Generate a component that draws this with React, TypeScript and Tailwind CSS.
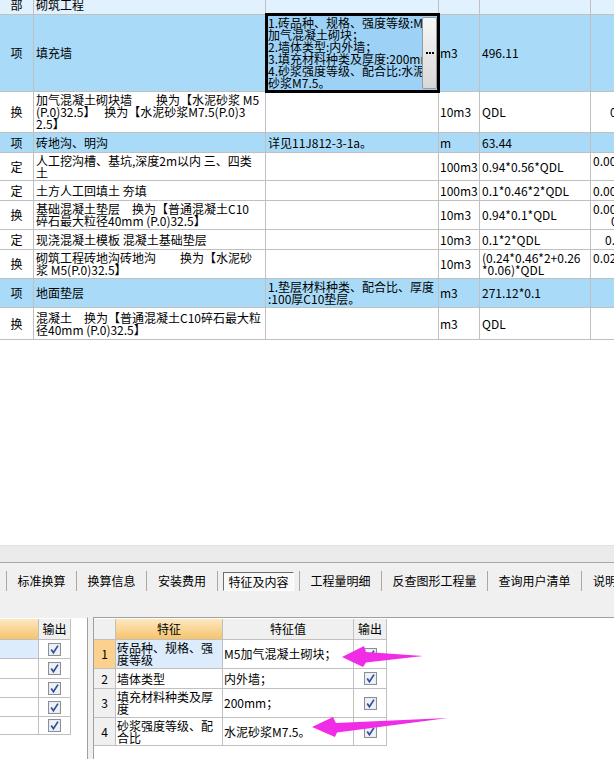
import React from "react";

type Line = { t: string; pl?: number };
type RowDef = {
  h: number;
  bg: string;
  c1: string;
  c2: string[];
  c3?: string[];
  c4?: string;
  c5?: string[];
  c6?: Line[];
  editor?: boolean;
  mt?: boolean;
};

const XI = "bg-[#a9dbf9]";
const WH = "bg-white";

const rows: RowDef[] = [
  { h: 20, bg: "bg-[#e1f1fd]", c1: "部", c2: ["砌筑工程"], mt: true },
  { h: 77, bg: XI, c1: "项", c2: ["填充墙"], editor: true, c4: "m3", c5: ["496.11"] },
  {
    h: 41,
    bg: WH,
    c1: "换",
    c2: ["加气混凝土砌块墙　　换为【水泥砂浆 M5", "(P.0)32.5】　 换为【水泥砂浆M7.5(P.0)3", "2.5】"],
    c4: "10m3",
    c5: ["QDL"],
    c6: [{ t: "0", pl: 19 }],
  },
  { h: 20, bg: XI, c1: "项", c2: ["砖地沟、明沟"], c3: ["详见11J812-3-1a。"], c4: "m", c5: ["63.44"] },
  {
    h: 28,
    bg: WH,
    c1: "定",
    c2: ["人工挖沟槽、基坑,深度2m以内 三、四类", "土"],
    c4: "100m3",
    c5: ["0.94*0.56*QDL"],
    c6: [{ t: "0.005264", pl: 2 }, { t: " ", pl: 2 }],
  },
  {
    h: 20,
    bg: WH,
    c1: "定",
    c2: ["土方人工回填土 夯填"],
    c4: "100m3",
    c5: ["0.1*0.46*2*QDL"],
    c6: [{ t: "0.00092", pl: 2 }],
  },
  {
    h: 29,
    bg: WH,
    c1: "换",
    c2: ["基础混凝土垫层　换为【普通混凝土C10", "碎石最大粒径40mm (P.0)32.5】"],
    c4: "10m3",
    c5: ["0.94*0.1*QDL"],
    c6: [{ t: "0.00940", pl: 2 }, { t: "0", pl: 20 }],
  },
  {
    h: 20,
    bg: WH,
    c1: "定",
    c2: ["现浇混凝土模板 混凝土基础垫层"],
    c4: "10m3",
    c5: ["0.1*2*QDL"],
    c6: [{ t: "0.2", pl: 14 }],
  },
  {
    h: 29,
    bg: WH,
    c1: "换",
    c2: ["砌筑工程砖地沟砖地沟　　换为【水泥砂", "浆 M5(P.0)32.5】"],
    c4: "10m3",
    c5: ["(0.24*0.46*2+0.26", "*0.06)*QDL"],
    c6: [{ t: "0.0236", pl: 2 }, { t: " ", pl: 2 }],
  },
  {
    h: 29,
    bg: XI,
    c1: "项",
    c2: ["地面垫层"],
    c3: ["1.垫层材料种类、配合比、厚度", ":100厚C10垫层。"],
    c4: "m3",
    c5: ["271.12*0.1"],
  },
  {
    h: 32,
    bg: WH,
    c1: "换",
    c2: ["混凝土　换为【普通混凝土C10碎石最大粒", "径40mm (P.0)32.5】"],
    c4: "m3",
    c5: ["QDL"],
  },
];

const cellBase = "shrink-0 border-r border-b border-[#c0c0c0] flex items-center overflow-hidden";

function Lines({ lines }: { lines: string[] }) {
  return (
    <div className="flex flex-col">
      {lines.map((l, i) => (
        <div key={i} className="whitespace-pre leading-[12px]">
          {l}
        </div>
      ))}
    </div>
  );
}

function Editor() {
  const lines = [
    "1.砖品种、规格、强度等级:M5",
    "加气混凝土砌块；",
    "2.墙体类型:内外墙；",
    "3.填充材料种类及厚度:200mm；",
    "4.砂浆强度等级、配合比:水泥",
    "砂浆M7.5。",
  ];
  return (
    <div className="absolute left-[-1px] top-[-2px] w-[175px] h-[80px] border-[3px] border-black bg-[#9dd2f6] z-10">
      <div className="w-[154px] overflow-hidden pl-[0px] pt-[1px]">
        {lines.map((l, i) => (
          <div key={i} className="whitespace-pre leading-[12px]">
            {l}
          </div>
        ))}
      </div>
      <div className="absolute right-0 top-[1px] w-[15px] h-[72px] rounded-[2px] border border-[#9a9a9a] bg-gradient-to-b from-[#f7f7f7] to-[#d8d8d8] flex items-center justify-center gap-[1px]">
        <div className="w-[2px] h-[2px] bg-black" />
        <div className="w-[2px] h-[2px] bg-black" />
        <div className="w-[2px] h-[2px] bg-black" />
      </div>
    </div>
  );
}

function TopTable() {
  return (
    <div className="flex flex-col text-[12px] text-black">
      {rows.map((r, i) => (
        <div
          key={i}
          className={`flex ${r.bg} ${r.mt ? "mt-[-5px]" : ""}`}
          style={{ height: r.h }}
        >
          <div className={`${cellBase} w-[34px] justify-center`}>{r.c1}</div>
          <div className={`${cellBase} w-[232px] pl-[2px]`}>
            <Lines lines={r.c2} />
          </div>
          <div className={`${cellBase} w-[173px] pl-[2px] ${r.editor ? "relative overflow-visible" : ""}`}>
            {r.c3 && <Lines lines={r.c3} />}
            {r.editor && <Editor />}
          </div>
          <div className={`${cellBase} w-[41px] pl-[1px]`}>{r.c4 ?? ""}</div>
          <div className={`${cellBase} w-[111px] pl-[2px]`}>{r.c5 && <Lines lines={r.c5} />}</div>
          <div className={`${cellBase} w-[80px]`}>
            {r.c6 && (
              <div className="flex flex-col">
                {r.c6.map((l, k) => (
                  <div key={k} className="whitespace-pre leading-[12px]" style={{ paddingLeft: l.pl ?? 0 }}>
                    {l.t}
                  </div>
                ))}
              </div>
            )}
          </div>
        </div>
      ))}
    </div>
  );
}

const tabs = [
  { t: "标准换算", w: 69 },
  { t: "换算信息", w: 69 },
  { t: "安装费用", w: 70 },
  { t: "特征及内容", w: 81, sel: true },
  { t: "工程量明细", w: 81 },
  { t: "反查图形工程量", w: 105 },
  { t: "查询用户清单", w: 93 },
];

function Sep() {
  return <div className="w-px h-[20px] bg-[#a8a8a8] shrink-0" />;
}

function Tabs() {
  return (
    <div className="flex items-start pl-[6px] pt-[8px] text-[12px] text-black">
      {tabs.map((t, i) => (
        <React.Fragment key={i}>
          <Sep />
          <div className="h-[20px] flex justify-center items-start shrink-0" style={{ width: t.w }}>
            {t.sel ? (
              <div className="mt-[1px] h-[19px] w-[71px] border-t border-l border-[#6e6e6e] border-r-white border-b-white border-r border-b bg-[#f9f9f9] flex items-center justify-center whitespace-nowrap">
                {t.t}
              </div>
            ) : (
              <div className="h-[20px] flex items-center whitespace-nowrap">{t.t}</div>
            )}
          </div>
        </React.Fragment>
      ))}
      <Sep />
      <div className="h-[20px] flex items-center pl-[11px] whitespace-nowrap">说明</div>
    </div>
  );
}

function Check() {
  return (
    <svg width="13" height="13" viewBox="0 0 13 13">
      <rect x="0.5" y="0.5" width="12" height="12" fill="#e4e8ee" stroke="#8c8f94" />
      <rect x="1.5" y="1.5" width="10" height="10" fill="#eef1f5" />
      <path d="M3.2 6.6 L5.4 9.8 L10 2.6" stroke="#2f4f9f" strokeWidth="1.7" fill="none" />
    </svg>
  );
}

const orangeHead = "bg-gradient-to-b from-[#fde8c0] to-[#f5c36c]";

function LeftPanel() {
  const hs = [19, 20, 19, 19, 18];
  return (
    <div className="w-[88px] shrink-0 bg-white border-r border-[#a0a0a0] flex flex-col pt-[1px] border-t border-t-[#f0f0f0]">
      <div className="flex h-[21px] text-[12px]">
        <div className={`w-[39px] border-r border-b border-[#c0c0c0] ${orangeHead}`} />
        <div className="w-[32px] border-r border-b border-[#c0c0c0] bg-[#f0f0f0] flex items-center justify-center">输出</div>
      </div>
      {hs.map((h, i) => (
        <div key={i} className="flex" style={{ height: h }}>
          <div className={`w-[39px] border-r border-b border-[#c0c0c0] ${i === 0 ? "bg-[#dcecfc]" : "bg-white"}`} />
          <div className="w-[32px] border-r border-b border-[#c0c0c0] flex items-center justify-center">
            <Check />
          </div>
        </div>
      ))}
    </div>
  );
}

const feats = [
  { n: "1", k: ["砖品种、规格、强", "度等级"], v: "M5加气混凝土砌块；", h: 29 },
  { n: "2", k: ["墙体类型"], v: "内外墙；", h: 20 },
  { n: "3", k: ["填充材料种类及厚", "度"], v: "200mm；", h: 29 },
  { n: "4", k: ["砂浆强度等级、配", "合比"], v: "水泥砂浆M7.5。", h: 28 },
];

function RightPanel() {
  const c = "border-r border-b border-[#c0c0c0] flex items-center shrink-0";
  return (
    <div className="flex-1 bg-white border-l border-t border-[#a0a0a0] pt-[1px] flex flex-col text-[12px]">
      <div className="flex h-[21px]">
        <div className={`${c} w-[22px] bg-[#f0f0f0]`} />
        <div className={`${c} w-[107px] justify-center ${orangeHead}`}>特征</div>
        <div className={`${c} w-[131px] justify-center bg-[#f0f0f0]`}>特征值</div>
        <div className={`${c} w-[33px] justify-center bg-[#f0f0f0]`}>输出</div>
      </div>
      {feats.map((f, i) => (
        <div key={i} className="flex" style={{ height: f.h }}>
          <div className={`${c} w-[22px] justify-center ${i === 0 ? "bg-[#fcd18e]" : "bg-[#f0f0f0]"}`}>{f.n}</div>
          <div className={`${c} w-[107px] pl-[1px] ${i === 0 ? "bg-[#dcecfc]" : "bg-white"}`}>
            <Lines lines={f.k} />
          </div>
          <div className={`${c} w-[131px] pl-[1px] whitespace-nowrap overflow-hidden`}>{f.v}</div>
          <div className={`${c} w-[33px] justify-center`}>
            <Check />
          </div>
        </div>
      ))}
    </div>
  );
}

function Arrows() {
  return (
    <svg className="absolute left-0 top-0 pointer-events-none z-20" width="614" height="759" viewBox="0 0 614 759">
      <polygon
        points="342,657 364,646 366,652 423,656 366,662.5 363,667"
        fill="#f02ce6"
      />
      <polygon
        points="312,727 333,717 336,723 448,718 337,732.5 335,737"
        fill="#f02ce6"
      />
    </svg>
  );
}

export default function App() {
  return (
    <div className="relative w-[614px] h-[759px] overflow-hidden bg-white text-black [font-family:'Noto_Sans_CJK_SC','Noto_Sans',sans-serif]">
      <TopTable />
      <div className="h-[205px] bg-white" />
      <div className="h-[17px] bg-[#ebebeb] border-t border-[#e2e2e2]" />
      <div className="h-px bg-[#a8a8a8]" />
      <div className="h-[54px] bg-[#f0f0f0]">
        <Tabs />
      </div>
      <div className="flex h-[142px]">
        <LeftPanel />
        <div className="w-[5px] shrink-0 bg-[#f0f0f0]" />
        <RightPanel />
      </div>
      <Arrows />
    </div>
  );
}
